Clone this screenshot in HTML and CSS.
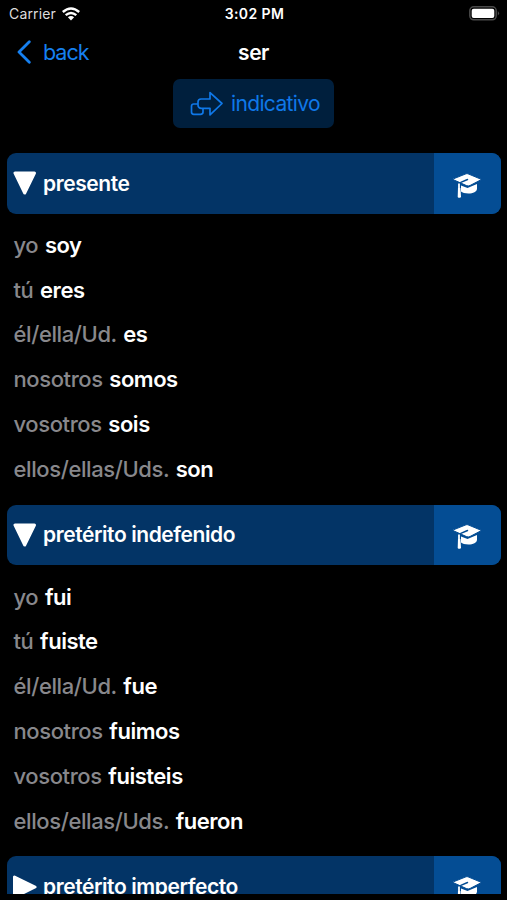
FILE: index.html
```
<!DOCTYPE html>
<html lang="es">
<head>
    <meta charset="UTF-8">
    <title>ser</title>
    <link rel="stylesheet" href="styles.css">
</head>
<body>
    <!-- shared icons -->
    <svg class="sprite">
        <symbol id="down" viewBox="0 0 24 24">
            <path d="M2 2H21.5L11.7 22Z" fill="#fff" stroke="#fff" stroke-width="3" stroke-linejoin="round"/>
        </symbol>
        <symbol id="right" viewBox="0 0 24 24">
            <path d="M1.5 2V22L22 12Z" fill="#fff" stroke="#fff" stroke-width="3" stroke-linejoin="round"/>
        </symbol>
        <symbol id="cap" viewBox="0 0 28 26">
            <path d="M8 12.5L14.5 15L24 11V15.5C24 18.8 20 20.5 15.5 20.5C12 20.5 9.3 19.8 8 18.5Z" fill="#fff"/>
            <path d="M13 .8Q14 .4 15 .8L27 5.8Q28.3 6.5 27 7.3L17 12.5Q15.3 13.4 13.5 12.6L1 7Q-.3 6.3 1 5.6Z" fill="#fff" stroke="#044d94" stroke-width="1"/>
            <path d="M14.5 6.5L7.8 9.4" fill="none" stroke="#044d94" stroke-width="1.5" stroke-linecap="round"/>
            <path d="M6 10.5V16" fill="none" stroke="#fff" stroke-width="1.8"/>
            <path d="M5 15H7.4L8 24Q6.2 25.7 4.7 24Z" fill="#fff"/>
        </symbol>
    </svg>

    <div class="screen">
        <div class="status">
            <div class="carrier">
                <span>Carrier</span>
                <svg class="wifi" viewBox="0 0 18 14" fill="none" stroke="#fff" stroke-width="2.4">
                    <path d="M.8 5Q9-2.2 17.2 5"/>
                    <path d="M3.7 8.2Q9 3.6 14.3 8.2"/>
                    <path d="M9 13.5L5.9 10.3Q9 7.8 12.1 10.3Z" fill="#fff" stroke="none"/>
                </svg>
            </div>
            <span class="time">3:02 PM</span>
            <svg class="battery" viewBox="0 0 31 15">
                <rect x=".8" y=".8" width="26.4" height="13" rx="4" fill="none" stroke="#4a4a4a" stroke-width="1.5"/>
                <rect x="2.7" y="2.7" width="22.6" height="9.2" rx="2" fill="#fff"/>
                <path d="M28.8 5Q31.4 7.3 28.8 9.6Z" fill="#4a4a4a"/>
            </svg>
        </div>

        <div class="navbar">
            <div class="back">
                <svg viewBox="0 0 14 24"><path d="M12.3 1.8L2 12L12.3 22.2" fill="none" stroke="#1680f0" stroke-width="2.8" stroke-linecap="round" stroke-linejoin="round"/></svg>
                <span>back</span>
            </div>
            <span class="title">ser</span>
        </div>

        <div class="mood">
            <svg viewBox="0 0 34 26" fill="none" stroke="#0f78e8" stroke-width="1.7" stroke-linejoin="round">
                <path d="M20 1.6L32 12.5L20 23.8V17.3H11.5Q8 17.3 8 14V11Q8 8 11 8H20Z"/>
                <path d="M8 13H3.8Q1.5 13 1.5 15.3V21Q1.5 23.3 3.8 23.3H10.5Q13 23.3 13 21V17.3"/>
            </svg>
            <span>indicativo</span>
        </div>

        <div class="tenses">
            <div class="tense">
                <div class="tense-name"><svg><use href="#down"/></svg><span>presente</span></div>
                <div class="practice"><svg><use href="#cap"/></svg></div>
            </div>
            <ul>
                <li>yo <b>soy</b></li>
                <li>tú <b>eres</b></li>
                <li>él/ella/Ud. <b>es</b></li>
                <li>nosotros <b>somos</b></li>
                <li>vosotros <b>sois</b></li>
                <li>ellos/ellas/Uds. <b>son</b></li>
            </ul>

            <div class="tense">
                <div class="tense-name"><svg><use href="#down"/></svg><span>pretérito indefenido</span></div>
                <div class="practice"><svg><use href="#cap"/></svg></div>
            </div>
            <ul>
                <li>yo <b>fui</b></li>
                <li>tú <b>fuiste</b></li>
                <li>él/ella/Ud. <b>fue</b></li>
                <li>nosotros <b>fuimos</b></li>
                <li>vosotros <b>fuisteis</b></li>
                <li>ellos/ellas/Uds. <b>fueron</b></li>
            </ul>

            <div class="tense">
                <div class="tense-name"><svg><use href="#right"/></svg><span>pretérito imperfecto</span></div>
                <div class="practice"><svg><use href="#cap"/></svg></div>
            </div>
        </div>
    </div>
</body>
</html>
```
FILE: styles.css
```
body {
    margin: 0;
    background-color: #000;
    color: #fff;
    font-family: Inter, "Liberation Sans", sans-serif;
}
.sprite {
    display: none;
}
.screen {
    display: flex;
    flex-direction: column;
    height: 894px;
    overflow: hidden;
}
.status, .navbar {
    display: grid;
    grid-template-columns: 1fr auto 1fr;
    align-items: center;
    flex-shrink: 0;
}
.status {
    height: 27px;
    padding: 0 7px 0 9px;
    font-size: 14px;
}
.carrier {
    display: flex;
    align-items: center;
    gap: 6px;
    letter-spacing: 0.15px;
    color: #ddd;
}
.wifi {
    width: 18px;
    height: 14px;
}
.time {
    font-weight: 600;
    letter-spacing: 0.4px;
}
.battery {
    width: 31px;
    height: 15px;
    justify-self: end;
}
.navbar {
    height: 50px;
    padding: 0 17px;
    margin-bottom: 2px;
    font-size: 21.5px;
}
.back {
    display: flex;
    align-items: center;
    gap: 12px;
    color: #1680f0;
    letter-spacing: -1px;
}
.back svg {
    width: 14px;
    height: 24px;
}
.title {
    font-size: 21px;
    font-weight: 600;
    letter-spacing: -0.5px;
}
.mood {
    display: flex;
    align-items: center;
    align-self: center;
    flex-shrink: 0;
    gap: 7px;
    box-sizing: border-box;
    width: 161px;
    height: 49px;
    padding-left: 17px;
    border-radius: 7px;
    background-color: #001f3d;
    color: #0f78e8;
    font-size: 21px;
    letter-spacing: -0.65px;
}
.mood svg {
    width: 34px;
    height: 26px;
}
.tenses {
    padding: 25px 6.5px 0 7px;
}
.tense {
    display: flex;
    height: 60.5px;
    border-radius: 9px;
    overflow: hidden;
    background-color: #033466;
}
.tense-name {
    display: flex;
    align-items: center;
    flex: 1;
    gap: 6px;
    padding-left: 6px;
    font-size: 21px;
    font-weight: 600;
    letter-spacing: -0.42px;
}
.tense-name svg {
    width: 24px;
    height: 24px;
}
.practice {
    display: flex;
    align-items: center;
    justify-content: center;
    width: 67px;
    background-color: #044d94;
}
.practice svg {
    width: 28px;
    height: 26px;
    margin-top: 5px;
}
ul {
    list-style: none;
    margin: 9.4px 0 13px;
    padding: 0 0 0 6.5px;
}
li {
    height: 44.8px;
    line-height: 44.8px;
    font-size: 22px;
    font-weight: 500;
    letter-spacing: -0.4px;
    word-spacing: 1.2px;
    color: #88888c;
}
b {
    font-weight: 600;
    letter-spacing: -0.48px;
    color: #fff;
}
```
